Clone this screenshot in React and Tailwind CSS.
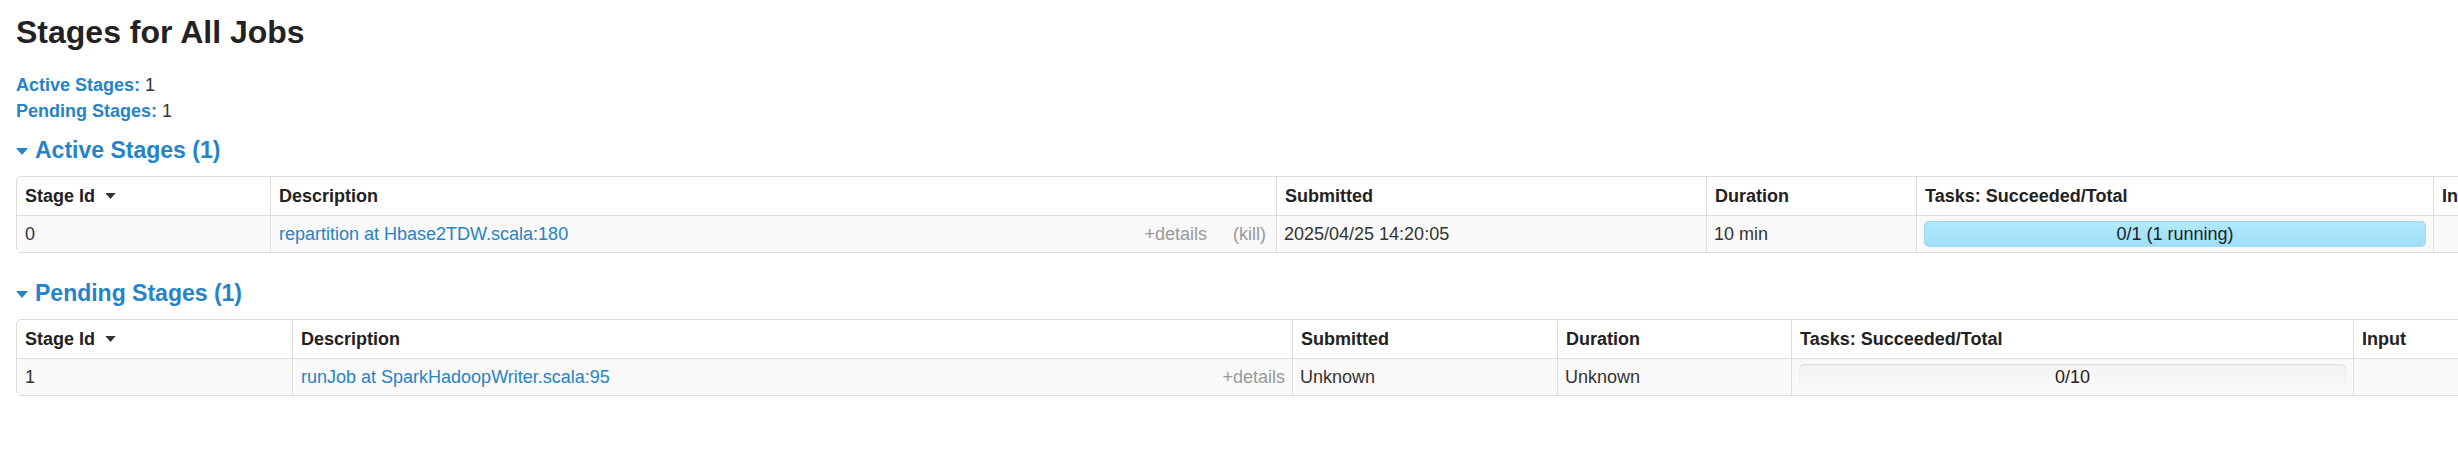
const activeCols = [
  { label: "Stage Id", w: "w-[253px]", sort: true },
  { label: "Description", w: "w-[1006px]" },
  { label: "Submitted", w: "w-[430px]" },
  { label: "Duration", w: "w-[210px]" },
  { label: "Tasks: Succeeded/Total", w: "w-[517px]" },
  { label: "Input", w: "w-[200px]" },
];

const pendingCols = [
  { label: "Stage Id", w: "w-[275px]", sort: true },
  { label: "Description", w: "w-[1000px]" },
  { label: "Submitted", w: "w-[265px]" },
  { label: "Duration", w: "w-[234px]" },
  { label: "Tasks: Succeeded/Total", w: "w-[562px]" },
  { label: "Input", w: "w-[200px]" },
];

function Caret({ className }) {
  return (
    <svg width="12" height="7" viewBox="0 0 12 7" className={className}>
      <path d="M0 0 L12 0 L6 7 Z" fill="currentColor" />
    </svg>
  );
}

function SectionTitle({ children, className }) {
  return (
    <h4
      className={`flex items-center gap-[7px] text-[23px] leading-[25px] font-bold text-[#2583c9] ${className}`}
    >
      <Caret className="mt-[2px]" />
      {children}
    </h4>
  );
}

function ProgressBar({ done, total, running }) {
  const started = running > 0;
  return (
    <div
      className={`relative h-[26px] rounded-[5px] shadow-[inset_0_1px_2px_rgba(0,0,0,0.1)] ${
        started
          ? "bg-gradient-to-b from-[#b0eafc] to-[#a0defa]"
          : "bg-gradient-to-b from-[#f3f3f3] to-[#f9f9f9]"
      }`}
    >
      <span className="absolute inset-0 flex items-center justify-center text-[#222]">
        {done}/{total}
        {started ? ` (${running} running)` : ""}
      </span>
    </div>
  );
}

function StageTable({ cols, row, width }) {
  return (
    <table
      className={`${width} max-w-none table-fixed border-separate border-spacing-0 border border-[#dddddd] rounded-[5px] text-[18px] text-[#333] whitespace-nowrap`}
    >
      <thead>
        <tr>
          {cols.map((c, i) => (
            <th
              key={c.label}
              className={`${c.w} h-[38px] px-[8px] text-left font-bold text-[#222] ${
                i > 0 ? "border-l border-[#dddddd]" : ""
              }`}
            >
              <span className="flex items-center gap-[10px]">
                {c.label}
                {c.sort && <Caret className="w-[11px] h-[6px] text-[#333]" />}
              </span>
            </th>
          ))}
        </tr>
      </thead>
      <tbody>
        <tr className="bg-[#f9f9f9]">
          <td className="h-[37px] px-[8px] border-t border-[#dddddd]">{row.id}</td>
          <td className="h-[37px] pl-[8px] pr-[7px] border-t border-l border-[#dddddd]">
            <div className="flex items-center">
              <a href="#" className="text-[#2583c9]">
                {row.desc}
              </a>
              <span className="ml-auto text-[#999]">+details</span>
              {row.kill && <span className="ml-[26px] mr-[3px] text-[#999]">(kill)</span>}
            </div>
          </td>
          <td className="h-[37px] px-[7px] border-t border-l border-[#dddddd]">{row.submitted}</td>
          <td className="h-[37px] px-[7px] border-t border-l border-[#dddddd]">{row.duration}</td>
          <td className="h-[37px] px-[7px] border-t border-l border-[#dddddd]">
            <ProgressBar done={row.done} total={row.total} running={row.running} />
          </td>
          <td className="h-[37px] border-t border-l border-[#dddddd]" />
        </tr>
      </tbody>
    </table>
  );
}

export default function App() {
  return (
    <div
      className="w-[2458px] h-[474px] overflow-hidden bg-white pl-[16px] text-[#333]"
      style={{ fontFamily: '"Liberation Sans", Arial, sans-serif' }}
    >
      <h3 className="pt-[15px] text-[32px] leading-[35px] font-bold text-[#222]">
        Stages for All Jobs
      </h3>
      <ul className="mt-[22px] text-[18px] leading-[26px]">
        <li>
          <a href="#" className="font-bold text-[#2583c9]">
            Active Stages:
          </a>{" "}
          1
        </li>
        <li>
          <a href="#" className="font-bold text-[#2583c9]">
            Pending Stages:
          </a>{" "}
          1
        </li>
      </ul>
      <SectionTitle className="mt-[14px] mb-[13px]">Active Stages (1)</SectionTitle>
      <StageTable
        cols={activeCols}
        width="w-[2618px]"
        row={{
          id: "0",
          desc: "repartition at Hbase2TDW.scala:180",
          kill: true,
          submitted: "2025/04/25 14:20:05",
          duration: "10 min",
          done: 0,
          total: 1,
          running: 1,
        }}
      />
      <SectionTitle className="mt-[28px] mb-[13px]">Pending Stages (1)</SectionTitle>
      <StageTable
        cols={pendingCols}
        width="w-[2538px]"
        row={{
          id: "1",
          desc: "runJob at SparkHadoopWriter.scala:95",
          kill: false,
          submitted: "Unknown",
          duration: "Unknown",
          done: 0,
          total: 10,
          running: 0,
        }}
      />
    </div>
  );
}
